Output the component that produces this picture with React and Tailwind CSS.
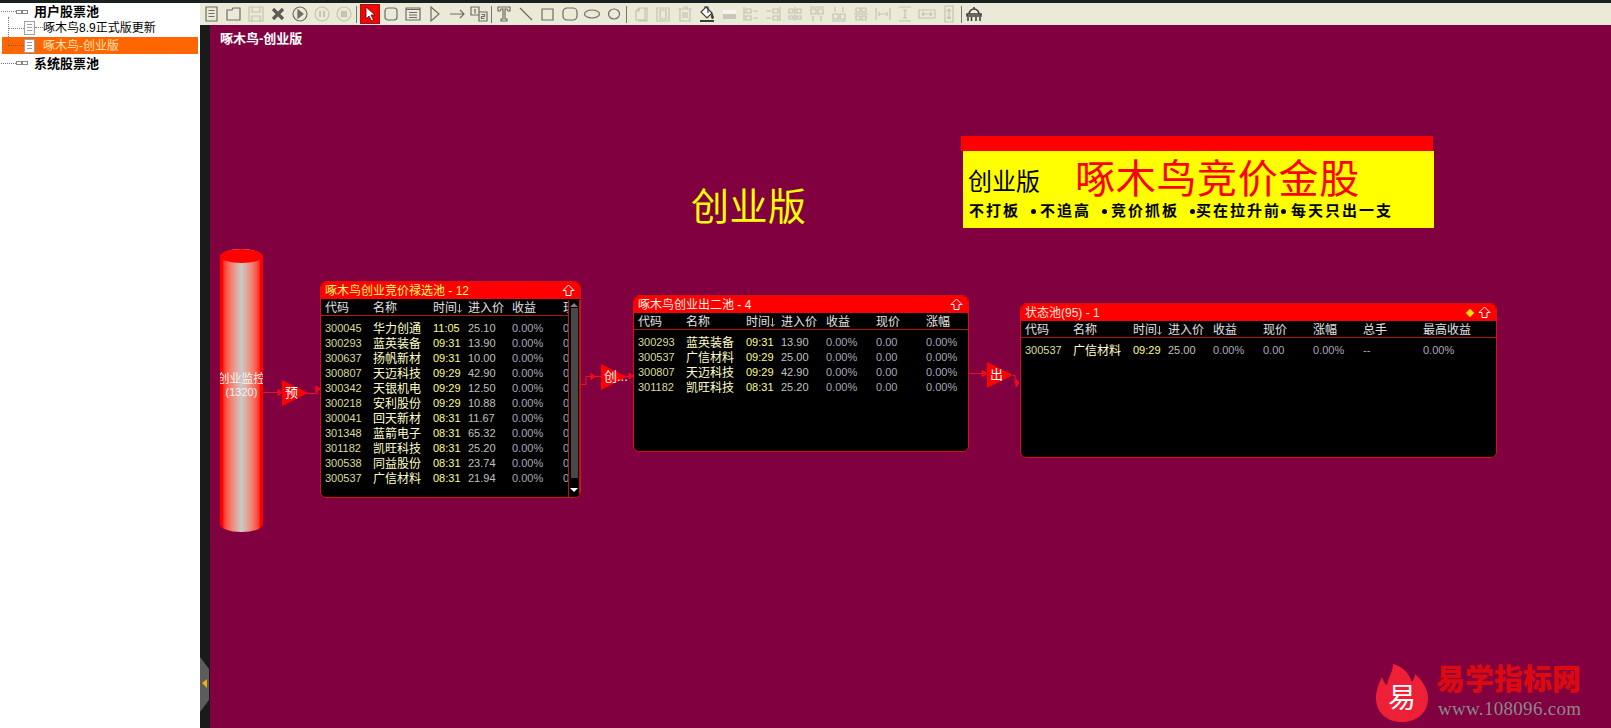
const CJK = { fontFamily: '"Liberation Sans","Noto Sans CJK SC",sans-serif' };

const rows1 = [
  ['300045','华力创通','11:05','25.10'],['300293','蓝英装备','09:31','13.90'],['300637','扬帆新材','09:31','10.00'],
  ['300807','天迈科技','09:29','42.90'],['300342','天银机电','09:29','12.50'],['300218','安利股份','09:29','10.88'],
  ['300041','回天新材','08:31','11.67'],['301348','蓝箭电子','08:31','65.32'],['301182','凯旺科技','08:31','25.20'],
  ['300538','同益股份','08:31','23.74'],['300537','广信材料','08:31','21.94'],
];
const rows2 = [['300293','蓝英装备','09:31','13.90'],['300537','广信材料','09:29','25.00'],['300807','天迈科技','09:29','42.90'],['301182','凯旺科技','08:31','25.20']];
const rows3 = [['300537','广信材料','09:29','25.00']];

function UpArrow() {
  return <svg width="13" height="13" viewBox="0 0 13 13" fill="none" stroke="#fff" strokeWidth="1"><path d="M6.5 1 L12 6.5 H9 V11.5 H4 V6.5 H1 Z" /></svg>;
}

function Panel({ className, title, titleClass, grid, headers, rows, extras, diamond, children }) {
  return (
    <div className={`absolute bg-black border border-[#d81010] rounded-md overflow-hidden ${className}`} style={CJK}>
      <div className={`h-[17px] bg-[#ff0000] flex items-center justify-between pl-[4px] pr-[5px] text-[12px] leading-none ${titleClass}`}>
        <span>{title}</span>
        <span className="flex items-center gap-[5px]">
          {diamond && <span className="w-[6px] h-[6px] bg-[#ffe000] rotate-45" />}
          <UpArrow />
        </span>
      </div>
      <div className={`grid ${grid} h-[17px] pl-[4px] pt-[2px] items-center border-b border-[#b01818] text-[12px] leading-none text-[#e0e0e0] whitespace-nowrap overflow-hidden`}>
        {headers.map((h) => <span key={h} className="flex items-center">{h.endsWith('↓') ? <>{h.slice(0, -1)}<svg width="5" height="9" viewBox="0 0 5 9" fill="none" stroke="#b0b0b0"><path d="M2.500 0v8 M0.500 6l2 2.500 2-2.500" /></svg></> : h}</span>)}
      </div>
      <div className="pt-[5px]">
        {rows.map((r) => (
          <div key={r[0] + r[2]} className={`grid ${grid} h-[15px] pl-[4px] items-center leading-none whitespace-nowrap overflow-hidden`}>
            <span className="text-[11px] text-[#dcdc9c]">{r[0]}</span>
            <span className="text-[12px] text-[#ffffc8]">{r[1]}</span>
            <span className="text-[11px] text-[#ffff80]">{r[2]}</span>
            <span className="text-[11px] text-[#c0c0c0]">{r[3]}</span>
            {extras.map((e, i) => <span key={i} className="text-[11px] text-[#a8a8b8]">{e}</span>)}
          </div>
        ))}
      </div>
      {children}
    </div>
  );
}

function Ic({ d, off, fill, children }) {
  return (
    <span className="w-[22px] h-[22px] flex items-center justify-center shrink-0">
      <svg width="18" height="18" viewBox="0 0 18 18" fill={fill || 'none'} stroke={off ? '#c4c4b4' : '#6e6e64'} strokeWidth="1.2">
        {d && <path d={d} />}{children}
      </svg>
    </span>
  );
}
const Sep = ({ className }) => <span className={`w-[1px] h-[17px] bg-[#77776c] ml-[1px] shrink-0 ${className}`} />;

function Toolbar() {
  return (
    <div className="h-[22px] bg-[#ebe9d8] flex items-center pl-[1px]">
      <Ic d="M3 2h11v14H3z M5.500 5.500h6 M5.500 8.500h6 M5.500 11.500h6" />
      <Ic d="M2 5h5l1 -2h7v12H2z" />
      <Ic off d="M2 2h14v14H2z M5 2v5h8V2 M5 16v-5h8v5" />
      <Ic><path d="M4 4l10 10 M14 4L4 14" stroke="#5c5c54" strokeWidth="3.200" /></Ic>
      <Ic><circle cx="9" cy="9" r="7" /><path d="M7 5l5 4-5 4z" fill="#6e6e64" /></Ic>
      <Ic off><circle cx="9" cy="9" r="7" /><path d="M7 6v6 M11 6v6" strokeWidth="2" /></Ic>
      <Ic off><circle cx="9" cy="9" r="7" /><rect x="6.500" y="6.500" width="5" height="5" fill="#c4c4b4" /></Ic>
      <Sep className="mr-[3px]" />
      <span className="w-[20px] h-[20px] bg-[#ff0000] border border-[#8c2020] flex items-center justify-center shrink-0">
        <svg width="14" height="16" viewBox="0 0 14 16"><path d="M3 1v12l3-3 2.500 5 2-1-2.500-5h4z" fill="#fff" stroke="#222" strokeWidth="0.800" /></svg>
      </span>
      <Ic d="M6 3h6a3 3 0 0 1 3 3v6a3 3 0 0 1-3 3H6a3 3 0 0 1-3-3V6a3 3 0 0 1 3-3z" />
      <Ic d="M2 3h14v12H2z M2 4.500h14 M5 7.500h8 M5 10h8 M5 12.500h8" />
      <Ic d="M5 2l8 7-8 7z" />
      <Ic d="M2 9h14 M12 5l4 4-4 4" />
      <Ic d="M1 2h8v8H1z M9 7h8v9H9z M4 4.500h1v4 M11.500 9.500h3v2h-3v2h3" />
      <Sep className="mr-[1px]" />
      <Ic d="M3 2h12v4h-2l-1-2h-2v10h2v2H6v-2h2V4H6L5 6H3z" />
      <Ic d="M3 3l12 12" />
      <Ic d="M3 4h11v11H3z" />
      <Ic d="M6 3h6a4 4 0 0 1 4 4v4a4 4 0 0 1-4 4H6a4 4 0 0 1-4-4V7a4 4 0 0 1 4-4z" />
      <Ic><ellipse cx="9" cy="9" rx="7.500" ry="4" /></Ic>
      <Ic><ellipse cx="9" cy="9" rx="5.500" ry="5" /></Ic>
      <Sep className="mr-[3px]" />
      <Ic off d="M7 3h6v12H4V6z M7 3v3H4 M13 3h2v13H6" />
      <Ic off d="M3 3h12v13H3z M6 5h6v9H6z M6 3h6" />
      <Ic off d="M2 4h14 M4 4v12h10V4 M7 2h4v2 M7 7v6 M9 7v6 M11 7v6" />
      <Ic>
        <path d="M8 2l6 6-5 5-6-6z" fill="#fff" stroke="#3c3c38" />
        <path d="M6 2h4v6" stroke="#3c3c38" />
        <path d="M14 9c1 2 2 3 1 4s-2 0-1-4z" fill="#3c3c38" stroke="#3c3c38" />
        <path d="M2 16h14" stroke="#3c3c38" strokeWidth="2" />
      </Ic>
      <span className="w-[22px] h-[22px] flex items-center justify-center shrink-0"><span className="w-[13px] h-[9px] bg-[#c8c8b8] border-t-[4px] border-t-[#f4f4ec]" /></span>
      <Ic off d="M2 2v14 M4 4h5v4H4z M4 11h5v4H4z M16 6h-5 M16 13h-5" />
      <Ic off d="M16 2v14 M9 4h5v4H9z M9 11h5v4H9z M2 6h5 M2 13h5" />
      <Ic off d="M9 2v14 M3 4h4v4H3z M11 4h4v4h-4z M3 11h4v3H3z M11 11h4v3h-4z" />
      <Ic off d="M2 2h14 M3 4h5v5H3z M10 4h5v5h-5z M5 11v5 M13 11v5" />
      <Ic off d="M2 16h14 M3 9h5v5H3z M10 9h5v5h-5z M5 2v5 M13 2v5" />
      <Ic off d="M2 9h14 M4 3h4v4H4z M10 3h4v4h-4z M4 11h4v4H4z M10 11h4v4h-4z" />
      <Ic off d="M2 3v12 M16 3v12 M5 9h8 M5 7v4 M13 7v4" />
      <Ic off d="M3 2h12 M3 16h12 M9 5v8 M7 5h4 M7 13h4" />
      <Ic off d="M1 5h16v8H1z M4 9h10 M4 9l2-2 M4 9l2 2 M14 9l-2-2 M14 9l-2 2" />
      <Ic off d="M5 1h8v16H5z M9 4v10 M9 4l-2 2 M9 4l2 2 M9 14l-2-2 M9 14l2-2" />
      <Sep className="mr-[1px]" />
      <Ic><path d="M2 9h14v2H2z M4 9a5 5 0 0 1 10 0 M9 2v2 M3 12v4 M6.500 12v4 M11 12v4 M15 12v4" stroke="#3c3c38" strokeWidth="1.500" /></Ic>
    </div>
  );
}

function TreeIcon() {
  return <span className="w-[11px] h-[14px] bg-white border border-[#a0a0a0] flex flex-col gap-[2px] pt-[2px] px-[2px] shrink-0 relative z-10"><i className="h-[1px] bg-[#a0a0a0]" /><i className="h-[1px] bg-[#a0a0a0]" /><i className="h-[1px] bg-[#a0a0a0]" /></span>;
}
function Chain() {
  return <span className="flex items-center shrink-0 w-[34px] pl-[1px]"><i className="w-[15px] border-t border-dotted border-[#777]" /><i className="w-[6px] h-[4px] border border-[#888]" /><i className="w-[6px] h-[4px] border border-[#888]" /></span>;
}

function Sidebar() {
  return (
    <div className="w-[200px] shrink-0 bg-white text-[12px] leading-none text-black relative" style={CJK}>
      <div className="h-[3px] bg-[#1a1f1f]" />
      <div className="h-[17px] flex items-center font-bold text-[13px]"><Chain />用户股票池</div>
      <div className="h-[15px] flex items-center pl-[24px]"><TreeIcon /><i className="w-[8px] border-t border-dotted border-[#777]" />啄木鸟8.9正式版更新</div>
      <div className="h-[17px] ml-[2px] mr-[2px] mt-[2px] bg-[#ff6600] flex items-center pl-[22px] text-[#ffe4b8]"><TreeIcon /><span className="ml-[8px]">啄木鸟-创业版</span></div>
      <div className="h-[18px] flex items-center font-bold text-[13px]"><Chain />系统股票池</div>
      <i className="absolute left-[8px] top-[17px] h-[28px] border-l border-dotted border-[#777]" />
      <i className="absolute left-[8px] top-[28px] w-[16px] border-t border-dotted border-[#777]" />
      <i className="absolute left-[8px] top-[45px] w-[16px] border-t border-dotted border-[#a05020]" />
    </div>
  );
}

function Tri({ className, label }) {
  return (
    <div className={`absolute h-[26px] w-[26px] ${className}`}>
      <svg width="26" height="26" className="absolute inset-0"><path d="M0 0L26 13L0 26Z" fill="#ff0000" /></svg>
      <span className="absolute left-[3px] top-[6px] text-[13px] leading-none text-white whitespace-nowrap" style={CJK}>{label}</span>
    </div>
  );
}

function Canvas() {
  return (
    <div className="relative flex-1 bg-[#800040] overflow-hidden" style={CJK}>
      {/* canvas origin = page (210, 25) */}
      <div className="absolute left-[10px] top-[6px] text-[13px] leading-[15px] font-bold text-white">啄木鸟-创业版</div>

      <div className="absolute left-[481px] top-[157px] text-[38px] leading-[50px] text-[#ffff00] whitespace-nowrap tracking-[0.5px]">创业版</div>

      {/* banner */}
      <div className="absolute left-[751px] top-[111px] w-[472px] h-[15px] bg-[#ff0000]" />
      <div className="absolute left-[753px] top-[126px] w-[471px] h-[77px] bg-[#ffff00] text-black">
        <span className="absolute left-[5px] top-[16px] text-[24px] leading-[30px]">创业版</span>
        <span className="absolute left-[112px] top-[3px] text-[40px] leading-[50px] tracking-[0.7px] text-[#ff0000] whitespace-nowrap">啄木鸟竞价金股</span>
        <div className="absolute left-[6px] top-[51px] flex items-center text-[15px] leading-[18px] font-bold tracking-[2px] whitespace-nowrap">
          <span>不打板</span>
          <span className="w-[5px] h-[5px] rounded-full bg-black ml-[11px] mr-[4px]" />
          <span>不追高</span>
          <span className="w-[5px] h-[5px] rounded-full bg-black ml-[11px] mr-[4px]" />
          <span>竞价抓板</span>
          <span className="w-[5px] h-[5px] rounded-full bg-black ml-[11px] mr-[1px]" />
          <span>买在拉升前</span>
          <span className="w-[5px] h-[5px] rounded-full bg-black mr-[5px]" />
          <span>每天只出一支</span>
        </div>
      </div>

      {/* cylinder */}
      <div className="absolute left-[10px] top-[224px] w-[43px] h-[283px] rounded-[21px/8px] overflow-hidden bg-gradient-to-r from-[#ff0000] from-6% via-[#c8c8c8] via-50% to-[#ff0000] to-94%">
        <div className="h-[14px] bg-[#ff0000] rounded-[50%]" />
        <div className="absolute left-0 right-0 top-[123px] text-center text-[12px] leading-[14px] text-[#f4f4f4] whitespace-nowrap flex flex-col items-center">
          <span>创业监控</span>
          <span className="text-[11px] leading-[12px]">(1320)</span>
        </div>
      </div>

      {/* connectors */}
      <svg className="absolute inset-0" width="1401" height="703" fill="none" stroke="#f01020" strokeWidth="1">
        <path d="M53 367.500H72" />
        <path d="M68 364.500l4 3-4 3z" fill="#ff0000" />
        <path d="M97 368.500H107V364H110" />
        <path d="M106 361l4 3-4 3z" fill="#ff0000" />
        <path d="M360 359.500H376V351.500H391" />
        <path d="M381 348.500l4 3-4 3z" fill="#ff0000" />
        <path d="M415 351.500H423" />
        <path d="M419 348l4 3-4 3z" fill="#ff0000" />
        <path d="M759 348.500H777" />
        <path d="M772 345.500l5 3-5 3z" fill="#ff0000" />
        <path d="M803 350.500H805V358H809" />
        <path d="M806 354l3 4-3 4z" fill="#ff0000" />
      </svg>
      <Tri className="left-[72px] top-[355px]" label="预" />
      <Tri className="left-[391px] top-[339px]" label="创..." />
      <Tri className="left-[777px] top-[337px]" label="出" />

      <Panel
        className="left-[110px] top-[256px] w-[261px] h-[217px]"
        title="啄木鸟创业竞价禄选池 - 12"
        titleClass="text-[#ffff66]"
        grid="grid-cols-[48px_60px_35px_44px_51px_1fr]"
        headers={['代码', '名称', '时间↓', '进入价', '收益', '现价']}
        rows={rows1}
        extras={['0.00%', '0.00']}
      >
        <div className="absolute right-0 top-[18px] bottom-0 w-[12px] bg-black border-l border-r border-[#b01818] flex flex-col items-center">
          <span className="w-0 h-0 mt-[3px] border-x-[4px] border-x-transparent border-b-[4px] border-b-[#808080]" />
          <span className="w-[7px] flex-1 bg-[#484848] mt-[1px] mb-[10px]" />
          <span className="w-0 h-0 mb-[5px] border-x-[4px] border-x-transparent border-t-[4px] border-t-white" />
        </div>
      </Panel>

      <Panel
        className="left-[423px] top-[270px] w-[336px] h-[157px]"
        title="啄木鸟创业出二池 - 4"
        titleClass="text-[#fff4e0]"
        grid="grid-cols-[48px_60px_35px_45px_50px_50px_1fr]"
        headers={['代码', '名称', '时间↓', '进入价', '收益', '现价', '涨幅']}
        rows={rows2}
        extras={['0.00%', '0.00', '0.00%']}
      />

      <Panel
        className="left-[810px] top-[278px] w-[477px] h-[155px]"
        title="状态池(95) - 1"
        titleClass="text-[#ffe8d8]"
        grid="grid-cols-[48px_60px_35px_45px_50px_50px_50px_60px_1fr]"
        headers={['代码', '名称', '时间↓', '进入价', '收益', '现价', '涨幅', '总手', '最高收益']}
        rows={rows3}
        extras={['0.00%', '0.00', '0.00%', '--', '0.00%']}
        diamond
      />

      {/* watermark */}
      <svg className="absolute left-[1165px] top-[638px]" width="54" height="60" viewBox="0 0 54 60">
        <path d="M27 59C11 59 1 49 1 35C1 27 4 20 7 14C8 18 10 21 12 22C14 13 19 5 18 1C27 3 34 10 37 19C39 16 40 13 40 11C47 17 53 26 53 35C53 49 43 59 27 59Z" fill="#ee2038" />
      </svg>
      <div className="absolute left-[1165px] top-[658px] w-[54px] text-center text-[28px] leading-[32px] text-white">易</div>
      <div className="absolute left-[1226px] top-[638px] text-[29px] leading-[34px] font-black text-[#dc0a10] whitespace-nowrap">易学指标网</div>
      <div className="absolute left-[1228px] top-[673px] text-[19px] leading-[22px] tracking-[0.3px] text-[#8a8a8a] whitespace-nowrap" style={{ fontFamily: '"Liberation Serif",serif' }}>www.108096.com</div>
    </div>
  );
}

export default function App() {
  return (
    <div className="w-[1611px] h-[728px] flex overflow-hidden bg-[#800040]">
      <Sidebar />
      <div className="flex-1 flex flex-col min-w-0">
        <div className="h-[3px] bg-[#1a1f1f] shrink-0" />
        <Toolbar />
        <div className="flex-1 flex min-h-0">
          <div className="w-[10px] shrink-0 bg-[#1a1a1a] flex flex-col justify-end pb-[16px]">
            <svg width="10" height="55" viewBox="0 0 10 55"><path d="M0 0L9 12V43L0 55Z" fill="#5c5c5c" /><path d="M2 26l5-4v9z" fill="#f0b000" /></svg>
          </div>
          <Canvas />
        </div>
      </div>
    </div>
  );
}
